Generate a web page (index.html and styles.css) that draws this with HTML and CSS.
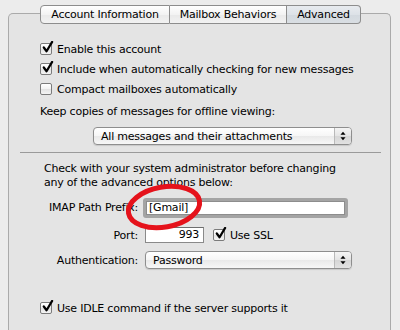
FILE: index.html
```html
<!DOCTYPE html>
<html lang="en">
<head>
  <meta charset="UTF-8">
  <title>Advanced</title>
  <link rel="stylesheet" href="styles.css">
</head>
<body>
  <div class="window">
    <div class="tabs">
      <div class="tab tab-account">Account Information</div>
      <div class="tab tab-mailbox">Mailbox Behaviors</div>
      <div class="tab tab-advanced selected">Advanced</div>
    </div>

    <div class="box">
      <div class="check-row first">
        <span class="checkbox checked"><svg viewBox="0 0 14 14"><path d="M3 7 L6 11 L12 1" /></svg></span>
        <span>Enable this account</span>
      </div>
      <div class="check-row">
        <span class="checkbox checked"><svg viewBox="0 0 14 14"><path d="M3 7 L6 11 L12 1" /></svg></span>
        <span>Include when automatically checking for new messages</span>
      </div>
      <div class="check-row">
        <span class="checkbox"></span>
        <span>Compact mailboxes automatically</span>
      </div>

      <div class="label keep">Keep copies of messages for offline viewing:</div>
      <div class="popup keep-popup">
        <span class="popup-text">All messages and their attachments</span>
        <span class="popup-arrows"><svg viewBox="0 0 7 11"><path d="M3.5 0.5 L6.5 4 L0.5 4 Z M0.5 7 L6.5 7 L3.5 10.5 Z" /></svg></span>
      </div>

      <div class="separator"></div>

      <div class="advanced">
        <p class="note">Check with your system administrator before changing<br>any of the advanced options below:</p>

        <div class="field-row imap-row">
          <span class="field-label">IMAP Path Prefix:</span>
          <span class="textfield imap-field">[Gmail]</span>
        </div>
        <div class="field-row port-row">
          <span class="field-label">Port:</span>
          <span class="textfield port-field">993</span>
          <span class="checkbox checked ssl"><svg viewBox="0 0 14 14"><path d="M3 7 L6 11 L12 1" /></svg></span>
          <span class="ssl-label">Use SSL</span>
        </div>
        <div class="field-row auth-row">
          <span class="field-label">Authentication:</span>
          <div class="popup auth-popup">
            <span class="popup-text">Password</span>
            <span class="popup-arrows"><svg viewBox="0 0 7 11"><path d="M3.5 0.5 L6.5 4 L0.5 4 Z M0.5 7 L6.5 7 L3.5 10.5 Z" /></svg></span>
          </div>
        </div>
      </div>

      <div class="check-row idle">
        <span class="checkbox checked"><svg viewBox="0 0 14 14"><path d="M3 7 L6 11 L12 1" /></svg></span>
        <span>Use IDLE command if the server supports it</span>
      </div>
    </div>

    <!-- red marker drawn over the prefix field -->
    <svg class="marker" viewBox="0 0 90 56" width="90" height="56">
      <ellipse cx="45" cy="28" rx="36" ry="20" transform="rotate(-10 45 28)" />
    </svg>
  </div>
</body>
</html>
```

FILE: styles.css
```css
html, body {
  height: 330px;
}

body {
  margin: 0;
  background: #ececec;
  font-family: "DejaVu Sans", Verdana, sans-serif;
  font-size: 11px;
  letter-spacing: -0.22px;
  color: #000;
  overflow: hidden;
}

.window {
  position: relative;
  box-sizing: border-box;
  padding: 5px 0 0 8px;
  width: 391px;
  height: 330px;
}

/* tabs */
.tabs {
  display: flex;
  padding-left: 32px;
  height: 19px;
  position: relative;
  z-index: 1;
}

.tab {
  flex: none;
  box-sizing: border-box;
  height: 19px;
  line-height: 17px;
  text-align: center;
  border: 1px solid #8d8d8d;
  border-left: none;
  background: linear-gradient(#ffffff, #f3f3f3 50%, #e9e9e9 51%, #f2f2f2);
}

.tab-account {
  width: 130px;
  border-left: 1px solid #8d8d8d;
  border-radius: 4px 0 0 4px;
}

.tab-mailbox {
  width: 117px;
}

.tab-advanced {
  width: 74px;
  border-radius: 0 4px 4px 0;
}

.tab.selected {
  background: linear-gradient(#e8ebef, #dde2e7 50%, #d3d9df 51%, #d9dee3);
}

/* box, its bottom edge is cut off by the window */
.box {
  margin-top: -11px;
  box-sizing: border-box;
  height: 317px;
  border: 1px solid #aaaaaa;
  border-bottom: none;
  border-radius: 5px 5px 0 0;
  background: #e4e4e4;
  padding: 25px 0 0 31px;
}

.check-row {
  display: flex;
  align-items: center;
  gap: 5px;
  height: 20px;
}

.checkbox {
  flex: none;
  position: relative;
  box-sizing: border-box;
  width: 12px;
  height: 12px;
  border: 1px solid #7b7b7b;
  border-radius: 2px;
  background: linear-gradient(#ffffff, #f2f2f2 50%, #e2e2e2 51%, #f4f4f4);
}

.checkbox svg {
  position: absolute;
  left: 0px;
  top: -3px;
  width: 13px;
  height: 13px;
  fill: none;
  stroke: #000;
  stroke-width: 2.4;
  stroke-linecap: round;
  stroke-linejoin: round;
}

.label {
  line-height: 14px;
}

.keep {
  margin-top: 6px;
}

/* popup buttons */
.popup {
  display: flex;
  align-items: center;
  box-sizing: border-box;
  height: 18px;
  border: 1px solid #8e8e8e;
  border-radius: 4px;
  background: linear-gradient(#ffffff, #f6f6f6 50%, #e9e9e9 51%, #f7f7f7);
  box-shadow: 0 1px 1px rgba(0, 0, 0, 0.12);
}

.popup-text {
  flex: 1;
  padding-left: 7px;
}

.popup-arrows {
  display: flex;
  justify-content: center;
  align-items: center;
  width: 16px;
  height: 100%;
  border-left: 1px solid #b9b9b9;
  background: linear-gradient(#f4f4f4, #e4e4e4 50%, #d6d6d6 51%, #e2e2e2);
  border-radius: 0 3px 3px 0;
}

.popup-arrows svg {
  width: 6px;
  height: 10px;
  fill: #000;
}

.keep-popup {
  margin: 8px 0 0 53px;
  width: 259px;
}

.separator {
  margin: 7px 0 0 -20px;
  width: 361px;
  height: 1px;
  background: #9a9a9a;
}

/* advanced options */
.advanced {
  padding-left: 4px;
}

.note {
  margin: 9px 0 0;
  line-height: 14px;
}

.field-row {
  display: flex;
  align-items: center;
}

.field-label {
  flex: none;
  width: 94px;
  margin-right: 7px;
  text-align: right;
}

.textfield {
  box-sizing: border-box;
  background: #fff;
  border: 1px solid #8a8a8a;
  padding: 0 4px;
  line-height: 14px;
}

.imap-row {
  margin-top: 7px;
  height: 21px;
}

.imap-field {
  margin-left: -2px;
  width: 205px;
  height: 20px;
  border: 3px solid #a4a4a4;
  border-radius: 3px;
  box-shadow: inset 0 0 0 1px #8d8d8d;
  padding: 0 3px;
  line-height: 14px;
}

.port-row {
  margin-top: 8px;
  height: 18px;
}

.port-field {
  width: 59px;
  height: 16px;
  text-align: right;
  border-top-color: #6e6e6e;
}

.ssl {
  margin-left: 9px;
}

.ssl-label {
  margin-left: 5px;
}

.auth-row {
  margin-top: 7px;
  height: 18px;
}

.auth-popup {
  width: 207px;
}

.idle {
  margin-top: 29px;
}

/* red marker */
.marker {
  position: absolute;
  left: 119px;
  top: 179px;
  overflow: visible;
}

.marker ellipse {
  fill: none;
  stroke: #e5121b;
  stroke-width: 5;
}
```
